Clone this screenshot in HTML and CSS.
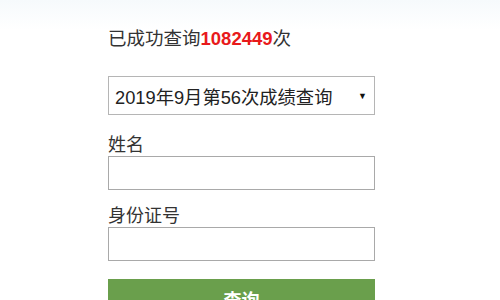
FILE: index.html
```html
<!DOCTYPE html>
<html lang="zh-CN">
<head>
    <meta charset="UTF-8">
    <meta name="viewport" content="width=device-width, initial-scale=1.0">
    <title>成绩查询</title>
    <link rel="stylesheet" href="styles.css">
</head>
<body>
    <div class="container">
        <p class="count">已成功查询<span class="num">1082449</span>次</p>
        <div class="select-box">
            <span>2019年9月第56次成绩查询</span>
            <span class="arrow">&#9660;</span>
        </div>
        <div class="input-group">
            <label for="name">姓名</label>
            <input type="text" id="name">
        </div>
        <div class="input-group">
            <label for="idcard">身份证号</label>
            <input type="text" id="idcard">
        </div>
        <button id="submit-btn">查询</button>
    </div>
</body>
</html>
```

FILE: styles.css
```css
* {
    box-sizing: border-box;
    margin: 0;
    padding: 0;
    font-family: "Liberation Sans", "Noto Sans CJK SC", sans-serif;
}

html, body {
    background: linear-gradient(#f6fafc, #ffffff 30px);
    color: #333;
}

.container {
    width: 267px;
    margin-left: 108px;
    padding-top: 28px;
}

.count {
    font-size: 18.5px;
    line-height: 22px;
    color: #333;
}

.num {
    color: #e8191b;
    font-weight: bold;
}

.select-box {
    display: flex;
    justify-content: space-between;
    align-items: center;
    height: 39px;
    margin-top: 26px;
    padding: 0 7px 0 6px;
    border: 1px solid #b5b5b5;
    font-size: 18.3px;
    color: #222;
}

.arrow {
    font-size: 9px;
    color: #111;
}

.input-group {
    display: flex;
    flex-direction: column;
    margin-top: 20px;
}

label {
    font-size: 18px;
    line-height: 21px;
    color: #333;
}

input[type="text"] {
    height: 34px;
    border: 1px solid #a9a9a9;
    background-color: #fff;
}

.input-group + .input-group {
    margin-top: 16px;
}

button {
    width: 100%;
    height: 40px;
    margin-top: 18px;
    border: none;
    background-color: #6a9f4c;
    color: #fff;
    font-size: 18px;
    font-weight: bold;
}
```
